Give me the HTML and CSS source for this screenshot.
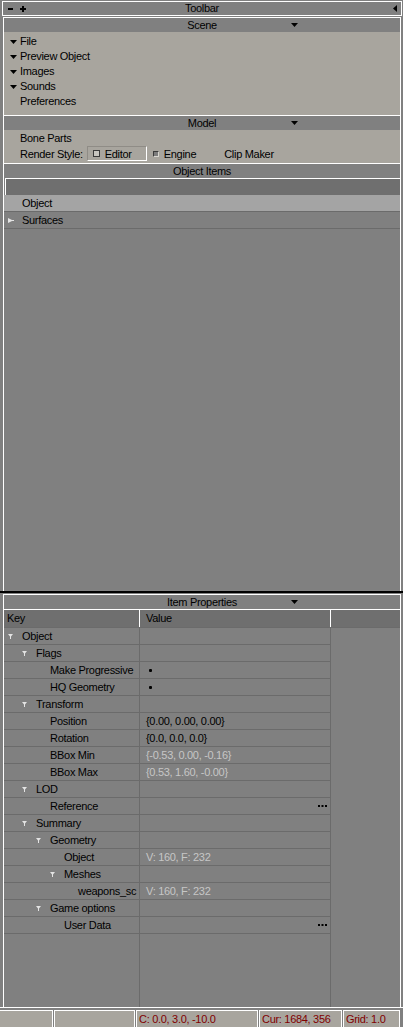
FILE: index.html
```html
<!DOCTYPE html>
<html>
<head>
<meta charset="utf-8">
<link rel="stylesheet" href="styles.css">
</head>
<body>
<div class="toolbar">
  <div class="tb-left">
    <svg width="5" height="6" viewBox="0 0 5 6"><rect x="0" y="2" width="5" height="2" fill="#000"/></svg>
    <svg width="6" height="6" viewBox="0 0 6 6"><rect x="0" y="2" width="6" height="2" fill="#000"/><rect x="2" y="0" width="2" height="6" fill="#000"/></svg>
  </div>
  <div class="tb-title">Toolbar</div>
  <div class="tb-right"><svg width="4" height="7" viewBox="0 0 4 7"><polygon points="4,0 4,7 0,3.5" fill="#000"/></svg></div>
</div>

<div class="upper">
  <div class="phead"><span class="title">Scene</span><svg class="arr" width="7" height="4" viewBox="0 0 7 4"><polygon points="0,0 7,0 3.5,4" fill="#000"/></svg></div>
  <div class="scene-body">
    <div class="li"><svg width="7" height="4" viewBox="0 0 7 4"><polygon points="0,0 7,0 3.5,4" fill="#000"/></svg>File</div>
    <div class="li"><svg width="7" height="4" viewBox="0 0 7 4"><polygon points="0,0 7,0 3.5,4" fill="#000"/></svg>Preview Object</div>
    <div class="li"><svg width="7" height="4" viewBox="0 0 7 4"><polygon points="0,0 7,0 3.5,4" fill="#000"/></svg>Images</div>
    <div class="li"><svg width="7" height="4" viewBox="0 0 7 4"><polygon points="0,0 7,0 3.5,4" fill="#000"/></svg>Sounds</div>
    <div class="li plain">Preferences</div>
  </div>

  <div class="phead sep"><span class="title">Model</span><svg class="arr" width="7" height="4" viewBox="0 0 7 4"><polygon points="0,0 7,0 3.5,4" fill="#000"/></svg></div>
  <div class="model-body">
    <div class="line">Bone Parts</div>
    <div class="render">
      <span>Render Style:</span>
      <span class="btn"><span class="chk1"></span><span class="btn-label">Editor</span></span>
      <span class="chk2"></span><span class="eng">Engine</span>
      <span class="clip">Clip Maker</span>
    </div>
  </div>

  <div class="phead sep"><span class="title">Object Items</span></div>
  <div class="search"></div>
  <div class="irow sel">Object</div>
  <div class="irow exp"><svg width="6" height="5" viewBox="0 0 6 5"><polygon points="0,0 4,2 6,2 6,3 4,3 0,5" fill="#e4e4e4"/></svg>Surfaces</div>
</div>

<div class="split"></div>

<div class="lower">
  <div class="phead"><span class="title">Item Properties</span><svg class="arr" width="7" height="4" viewBox="0 0 7 4"><polygon points="0,0 7,0 3.5,4" fill="#000"/></svg></div>
  <div class="thead">
    <div class="th-key">Key</div>
    <div class="th-val">Value</div>
    <div class="th-rest"></div>
  </div>
  <div class="tbody">
    <div class="tree">
      <div class="trow"><div class="k d0"><svg class="tw" width="5" height="5" viewBox="0 0 5 5"><polygon points="0,0 5,0 3,2.5 3,5 2,5 2,2.5" fill="#e4e4e4"/></svg>Object</div><div class="v"></div></div>
      <div class="trow"><div class="k d1"><svg class="tw" width="5" height="5" viewBox="0 0 5 5"><polygon points="0,0 5,0 3,2.5 3,5 2,5 2,2.5" fill="#e4e4e4"/></svg>Flags</div><div class="v"></div></div>
      <div class="trow"><div class="k l2">Make Progressive</div><div class="v"><span class="dot"></span></div></div>
      <div class="trow"><div class="k l2">HQ Geometry</div><div class="v"><span class="dot"></span></div></div>
      <div class="trow"><div class="k d1"><svg class="tw" width="5" height="5" viewBox="0 0 5 5"><polygon points="0,0 5,0 3,2.5 3,5 2,5 2,2.5" fill="#e4e4e4"/></svg>Transform</div><div class="v"></div></div>
      <div class="trow"><div class="k l2">Position</div><div class="v">{0.00, 0.00, 0.00}</div></div>
      <div class="trow"><div class="k l2">Rotation</div><div class="v">{0.0, 0.0, 0.0}</div></div>
      <div class="trow"><div class="k l2">BBox Min</div><div class="v dis">{-0.53, 0.00, -0.16}</div></div>
      <div class="trow"><div class="k l2">BBox Max</div><div class="v dis">{0.53, 1.60, -0.00}</div></div>
      <div class="trow"><div class="k d1"><svg class="tw" width="5" height="5" viewBox="0 0 5 5"><polygon points="0,0 5,0 3,2.5 3,5 2,5 2,2.5" fill="#e4e4e4"/></svg>LOD</div><div class="v"></div></div>
      <div class="trow"><div class="k l2">Reference</div><div class="v"><svg class="more" width="9" height="2" viewBox="0 0 9 2"><rect x="0" y="0" width="2" height="2" fill="#000"/><rect x="3.5" y="0" width="2" height="2" fill="#000"/><rect x="7" y="0" width="2" height="2" fill="#000"/></svg></div></div>
      <div class="trow"><div class="k d1"><svg class="tw" width="5" height="5" viewBox="0 0 5 5"><polygon points="0,0 5,0 3,2.5 3,5 2,5 2,2.5" fill="#e4e4e4"/></svg>Summary</div><div class="v"></div></div>
      <div class="trow"><div class="k d2"><svg class="tw" width="5" height="5" viewBox="0 0 5 5"><polygon points="0,0 5,0 3,2.5 3,5 2,5 2,2.5" fill="#e4e4e4"/></svg>Geometry</div><div class="v"></div></div>
      <div class="trow"><div class="k l3">Object</div><div class="v dis">V: 160, F: 232</div></div>
      <div class="trow"><div class="k d3"><svg class="tw" width="5" height="5" viewBox="0 0 5 5"><polygon points="0,0 5,0 3,2.5 3,5 2,5 2,2.5" fill="#e4e4e4"/></svg>Meshes</div><div class="v"></div></div>
      <div class="trow"><div class="k l4">weapons_sc</div><div class="v dis">V: 160, F: 232</div></div>
      <div class="trow"><div class="k d2"><svg class="tw" width="5" height="5" viewBox="0 0 5 5"><polygon points="0,0 5,0 3,2.5 3,5 2,5 2,2.5" fill="#e4e4e4"/></svg>Game options</div><div class="v"></div></div>
      <div class="trow"><div class="k l3">User Data</div><div class="v"><svg class="more" width="9" height="2" viewBox="0 0 9 2"><rect x="0" y="0" width="2" height="2" fill="#000"/><rect x="3.5" y="0" width="2" height="2" fill="#000"/><rect x="7" y="0" width="2" height="2" fill="#000"/></svg></div></div>
    </div>
    <div class="rest"></div>
  </div>
</div>

<div class="status">
  <div class="sc c1"></div>
  <div class="sc c2"></div>
  <div class="sc c3">C: 0.0, 3.0, -10.0</div>
  <div class="sc c4">Cur: 1684, 356</div>
  <div class="sc c5">Grid: 1.0</div>
</div>
</body>
</html>
```

FILE: styles.css
```css
* { box-sizing: border-box; }
html, body { margin: 0; padding: 0; }
body {
  width: 403px;
  height: 1027px;
  overflow: hidden;
  background: #808080;
  font-family: "Liberation Sans", Arial, sans-serif;
  font-size: 11px;
  letter-spacing: -0.3px;
  color: #000;
  display: flex;
  flex-direction: column;
}

/* toolbar */
.toolbar {
  flex: none;
  margin: 1px 1px 0 2px;
  height: 15px;
  border: 1px solid #fff;
  display: grid;
  grid-template-columns: 1fr auto 1fr;
  align-items: center;
  line-height: 13px;
}
.tb-left { display: flex; align-items: center; gap: 7px; padding-left: 5px; }
.tb-left svg, .tb-right svg { display: block; }
.tb-right { justify-self: end; padding-right: 4px; }

/* panels */
.upper {
  flex: none;
  margin: 1px 2px 0 3px;
  height: 574px;
  border: 1px solid #fff;
  border-bottom: 0;
  display: flex;
  flex-direction: column;
}
.phead {
  flex: none;
  height: 14px;
  line-height: 14px;
  display: grid;
  grid-template-columns: 287px 7px 1fr;
  align-items: center;
  background: #808080;
}
.phead.sep { height: 15px; border-top: 1px solid #fff; }
.phead .title { grid-column: 1 / -1; grid-row: 1; text-align: center; }
.phead .arr { grid-column: 2; grid-row: 1; display: block; }

.scene-body {
  background: #a8a59e;
  padding: 2px 0 6px 6px;
  line-height: 15px;
}
.li { display: flex; align-items: center; height: 15px; }
.li svg { display: block; margin-right: 3px; }
.li.plain { padding-left: 10px; }

.model-body {
  background: #a8a59e;
  padding: 1px 0 1px 16px;
}
.model-body .line { height: 15px; line-height: 15px; }
.render { display: flex; align-items: center; height: 16px; line-height: 15px; }
.btn {
  align-self: flex-start;
  margin-left: 4px;
  width: 60px;
  height: 15px;
  border: 1px solid;
  border-color: #8f8c86 #fff #fff #8f8c86;
  display: flex;
  align-items: center;
  padding-left: 5px;
}
.chk1 {
  width: 7px; height: 7px;
  border: 1px solid #3a3a3a;
  background: #c8c6c0;
  margin-right: 5px;
  flex: none;
}
.btn-label { padding-top: 2px; }
.chk2 {
  width: 6px; height: 6px;
  margin-left: 6px;
  border: 1px solid;
  border-color: #3a3a3a #d8d6d0 #d8d6d0 #3a3a3a;
  background: #7c7c7c;
  flex: none;
}
.eng { margin-left: 5px; }
.clip { margin-left: 28px; }

.search {
  flex: none;
  margin-left: 1px;
  height: 17px;
  border-top: 1px solid #fff;
  border-left: 1px solid #fff;
  background: #6f6f6f;
}
.irow {
  flex: none;
  height: 17px;
  line-height: 16px;
  border-bottom: 1px solid #6b6b6b;
  display: flex;
  align-items: center;
  padding-left: 18px;
}
.irow.sel { background: #a4a4a4; }
.irow.exp { padding-left: 4px; }
.irow.exp svg { display: block; margin-right: 8px; }

.split { flex: none; height: 2px; background: #000; }

.lower {
  flex: 1;
  min-height: 0;
  margin: 1px 2px 0 3px;
  border: 1px solid #fff;
  border-bottom: 0;
  display: flex;
  flex-direction: column;
}
.thead {
  flex: none;
  display: flex;
  height: 19px;
  line-height: 17px;
  border-top: 1px solid #fff;
  border-bottom: 1px solid #6b6b6b;
}
.th-key { width: 136px; padding-left: 3px; background: #6f6f6f; border-right: 1px solid #fff; }
.th-val { width: 191px; padding-left: 6px; background: #6f6f6f; border-right: 1px solid #fff; }
.th-rest { flex: 1; background: #6f6f6f; }

.tbody { flex: 1; display: flex; min-height: 0; }
.tree {
  width: 327px;
  display: flex;
  flex-direction: column;
  border-right: 1px solid #6b6b6b;
  background: linear-gradient(to right, transparent 135px, #6b6b6b 135px, #6b6b6b 136px, transparent 136px);
}
.rest { flex: 1; }
.trow {
  flex: none;
  display: flex;
  height: 17px;
  line-height: 16px;
  border-bottom: 1px solid #6b6b6b;
}
.k {
  width: 136px;
  flex: none;
  border-right: 1px solid #6b6b6b;
  display: flex;
  align-items: center;
  overflow: hidden;
  white-space: nowrap;
}
.k .tw { display: block; flex: none; margin-right: 9px; }
.d0 { padding-left: 4px; }
.d1 { padding-left: 18px; }
.d2 { padding-left: 32px; }
.d3 { padding-left: 46px; }
.l2 { padding-left: 46px; }
.l3 { padding-left: 60px; }
.l4 { padding-left: 74px; }
.v {
  flex: 1;
  padding-left: 6px;
  display: flex;
  align-items: center;
  white-space: nowrap;
}
.v.dis { color: #c6c6c6; }
.dot { width: 3px; height: 3px; background: #000; border-radius: 1px; margin-left: 3px; }
.more { display: block; margin-left: auto; margin-right: 3px; }

/* status */
.status {
  flex: none;
  height: 20px;
  border-top: 1px solid #fff;
  padding-top: 2px;
  display: flex;
  gap: 1px;
}
.sc {
  height: 17px;
  background: #a8a59e;
  border: 1px solid #fff;
  border-bottom: 0;
  color: #800000;
  padding-left: 2px;
  line-height: 16px;
  white-space: nowrap;
}
.c1 { width: 53px; border-left: 0; }
.c2 { width: 81px; }
.c3 { width: 122px; }
.c4 { width: 83px; }
.c5 { width: 57px; }
```
